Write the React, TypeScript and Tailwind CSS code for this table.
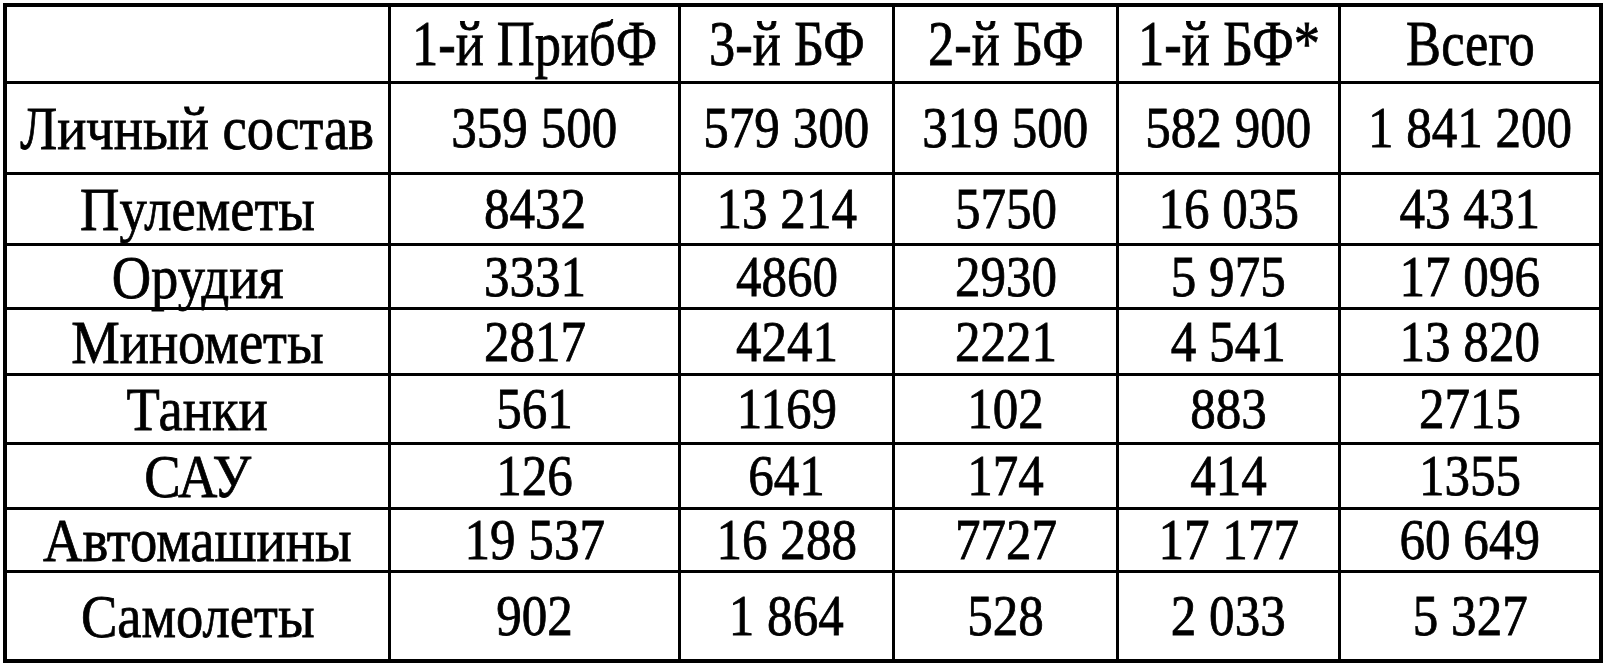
import React from 'react';

type Row = { label: string; values: string[] };

const headers = ['1-й ПрибФ', '3-й БФ', '2-й БФ', '1-й БФ*', 'Всего'];

const rows: Row[] = [
  { label: 'Личный состав', values: ['359 500', '579 300', '319 500', '582 900', '1 841 200'] },
  { label: 'Пулеметы', values: ['8432', '13 214', '5750', '16 035', '43 431'] },
  { label: 'Орудия', values: ['3331', '4860', '2930', '5 975', '17 096'] },
  { label: 'Минометы', values: ['2817', '4241', '2221', '4 541', '13 820'] },
  { label: 'Танки', values: ['561', '1169', '102', '883', '2715'] },
  { label: 'САУ', values: ['126', '641', '174', '414', '1355'] },
  { label: 'Автомашины', values: ['19 537', '16 288', '7727', '17 177', '60 649'] },
  { label: 'Самолеты', values: ['902', '1 864', '528', '2 033', '5 327'] },
];

type Kind = 'head' | 'label' | 'num';

const Cell = ({
  children,
  lastCol,
  lastRow,
  kind = 'num',
}: {
  children?: React.ReactNode;
  lastCol?: boolean;
  lastRow?: boolean;
  kind?: Kind;
}) => {
  // scanned book table: condensed serif, inked a bit heavier
  const text =
    kind === 'head'
      ? 'text-[64px] scale-x-[0.82]'
      : kind === 'label'
        ? 'text-[62px] scale-x-[0.88]'
        : 'text-[58px] scale-x-[0.88]';
  return (
    <div
      className={`flex items-center justify-center border-black ${lastCol ? 'border-r-[4px]' : 'border-r-[3px]'} ${
        lastRow ? 'border-b-[4px]' : 'border-b-[3px]'
      }`}
    >
      <span className={`inline-block whitespace-nowrap leading-none [-webkit-text-stroke:0.8px_black] ${text}`}>
        {children}
      </span>
    </div>
  );
};

export default function App() {
  return (
    <div className="w-[1607px] h-[667px] bg-white text-black overflow-hidden pl-[3px] pt-[3px] font-['Liberation_Serif','Times_New_Roman',serif]">
      <div className="grid w-max grid-cols-[384px_290px_214px_224px_222px_262px] grid-rows-[77px_91px_71px_64px_66px_69px_65px_63px_90px] border-l-[4px] border-t-[4px] border-black">
        <Cell />
        {headers.map((h, i) => (
          <Cell key={h} kind="head" lastCol={i === headers.length - 1}>
            {h}
          </Cell>
        ))}
        {rows.map((row, r) => (
          <React.Fragment key={row.label}>
            <Cell kind="label" lastRow={r === rows.length - 1}>
              {row.label}
            </Cell>
            {row.values.map((v, i) => (
              <Cell key={i} lastCol={i === row.values.length - 1} lastRow={r === rows.length - 1}>
                {v}
              </Cell>
            ))}
          </React.Fragment>
        ))}
      </div>
    </div>
  );
}
